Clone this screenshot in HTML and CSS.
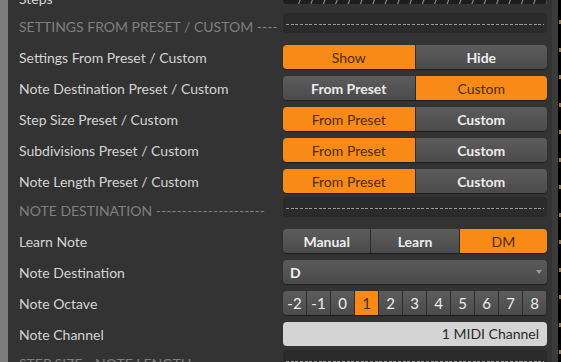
FILE: index.html
```html
<!DOCTYPE html>
<html>
<head>
<meta charset="utf-8">
<link rel="stylesheet" href="styles.css">
</head>
<body>
<div class="app">
  <div class="rail"></div>
  <div class="panel">
    <div class="row first">
      <span class="label">Steps</span>
      <div class="steps-box"><span class="ticks">/ / / / / / / / / / / / / / / / / / / / / / / / /</span></div>
    </div>
    <div class="row header">
      <span class="hlabel">SETTINGS FROM PRESET / CUSTOM ----</span>
      <div class="dash-box"><div class="dash"></div></div>
    </div>
    <div class="row">
      <span class="label">Settings From Preset / Custom</span>
      <div class="seg"><button class="on">Show</button><button>Hide</button></div>
    </div>
    <div class="row">
      <span class="label">Note Destination Preset / Custom</span>
      <div class="seg"><button>From Preset</button><button class="on">Custom</button></div>
    </div>
    <div class="row">
      <span class="label">Step Size Preset / Custom</span>
      <div class="seg"><button class="on">From Preset</button><button>Custom</button></div>
    </div>
    <div class="row">
      <span class="label">Subdivisions Preset / Custom</span>
      <div class="seg"><button class="on">From Preset</button><button>Custom</button></div>
    </div>
    <div class="row">
      <span class="label">Note Length Preset / Custom</span>
      <div class="seg"><button class="on">From Preset</button><button>Custom</button></div>
    </div>
    <div class="row header">
      <span class="hlabel">NOTE DESTINATION ---------------------</span>
      <div class="dash-box"><div class="dash"></div></div>
    </div>
    <div class="row">
      <span class="label">Learn Note</span>
      <div class="seg"><button>Manual</button><button>Learn</button><button class="on">DM</button></div>
    </div>
    <div class="row">
      <span class="label">Note Destination</span>
      <div class="select"><span>D</span><span class="caret"></span></div>
    </div>
    <div class="row">
      <span class="label">Note Octave</span>
      <div class="seg octave"><button>-2</button><button>-1</button><button>0</button><button class="on">1</button><button>2</button><button>3</button><button>4</button><button>5</button><button>6</button><button>7</button><button>8</button></div>
    </div>
    <div class="row">
      <span class="label">Note Channel</span>
      <div class="field">1 MIDI Channel</div>
    </div>
    <div class="row header">
      <span class="hlabel">STEP SIZE - NOTE LENGTH ---------------</span>
      <div class="dash-box"><div class="dash"></div></div>
    </div>
  </div>
  <div class="track"></div>
  <div class="edge"></div>
</div>
</body>
</html>
```

FILE: styles.css
```css
* { box-sizing: border-box; }
html, body {
  margin: 0;
  padding: 0;
  background: #333333;
  width: 561px;
  height: 362px;
  overflow: hidden;
  font-family: Lato, "Open Sans", sans-serif;
}
.app {
  display: flex;
  height: 362px;
  overflow: hidden;
}
.rail {
  flex: none;
  width: 8px;
  background: #7b7b7b;
}
.panel {
  flex: none;
  width: 544px;
  background: #333333;
  padding: 0 5px 0 11px;
  overflow: hidden;
}
.row {
  display: grid;
  grid-template-columns: 264px 264px;
  height: 31px;
  align-items: start;
}
.row.first {
  margin-top: -17px;
  height: 30px;
}
.row.header {
  height: 29px;
}
.label {
  font-size: 14px;
  line-height: 31px;
  color: #d3d3d3;
  white-space: nowrap;
}
.hlabel {
  font-size: 14px;
  line-height: 27px;
  color: #7f7f7f;
  white-space: nowrap;
}
.steps-box {
  height: 21px;
  background: #1d1d1d;
  border-radius: 4px;
  position: relative;
  overflow: hidden;
}
.ticks {
  position: absolute;
  left: 14px;
  bottom: -4px;
  font-size: 9px;
  color: #cfcfcf;
  letter-spacing: 3px;
  white-space: nowrap;
}
.dash-box {
  height: 20px;
  background: #2a2a2a;
  border-radius: 4px;
  padding: 0 3px;
  display: flex;
  align-items: center;
}
.dash {
  flex: 1;
  height: 1px;
  margin-top: 3px;
  background: repeating-linear-gradient(90deg, #9a9a9a 0 3px, transparent 3px 4.67px);
}
.seg {
  display: flex;
  height: 24px;
  margin-top: 3px;
  border-radius: 4px;
  overflow: hidden;
  box-shadow: 0 1px 1px rgba(0,0,0,0.45);
}
.seg button {
  flex: 1;
  min-width: 0;
  border: none;
  padding: 0;
  margin: 0;
  font-family: Lato, sans-serif;
  font-size: 14px;
  font-weight: 700;
  color: #ececec;
  background: linear-gradient(#5c5c5c, #4b4b4b);
  border-left: 1px solid #2c2c2c;
}
.seg button:first-child { border-left: none; }
.seg button.on {
  background: #fa8a18;
  color: #4a2d0b;
  font-weight: 400;
}
.octave button {
  flex: none;
  width: 24px;
  font-size: 15px;
  font-weight: 400;
}
.octave button:first-child { width: 23px; }
.select {
  height: 24px;
  margin-top: 3px;
  border-radius: 4px;
  background: linear-gradient(#5a5a5a, #4a4a4a);
  box-shadow: 0 1px 1px rgba(0,0,0,0.45);
  display: flex;
  align-items: center;
  justify-content: space-between;
  padding: 0 5px 0 7px;
  font-size: 14px;
  font-weight: 700;
  color: #f2f2f2;
}
.caret {
  width: 0;
  height: 0;
  border-left: 3px solid transparent;
  border-right: 3px solid transparent;
  border-top: 4px solid #9c9c9c;
}
.field {
  height: 24px;
  margin-top: 3px;
  border-radius: 4px;
  background: #d4d4d4;
  color: #2a2a2a;
  font-size: 14px;
  line-height: 24px;
  text-align: right;
  padding-right: 8px;
}
.track {
  flex: none;
  width: 6px;
  background: #3b3b3b;
}
.edge {
  flex: none;
  width: 3px;
  background:
    repeating-linear-gradient(180deg, #000 0 20px, #a8702c 20px 24px, #000 24px 27.5px);
  border-left: 1px solid #000;
}
```
